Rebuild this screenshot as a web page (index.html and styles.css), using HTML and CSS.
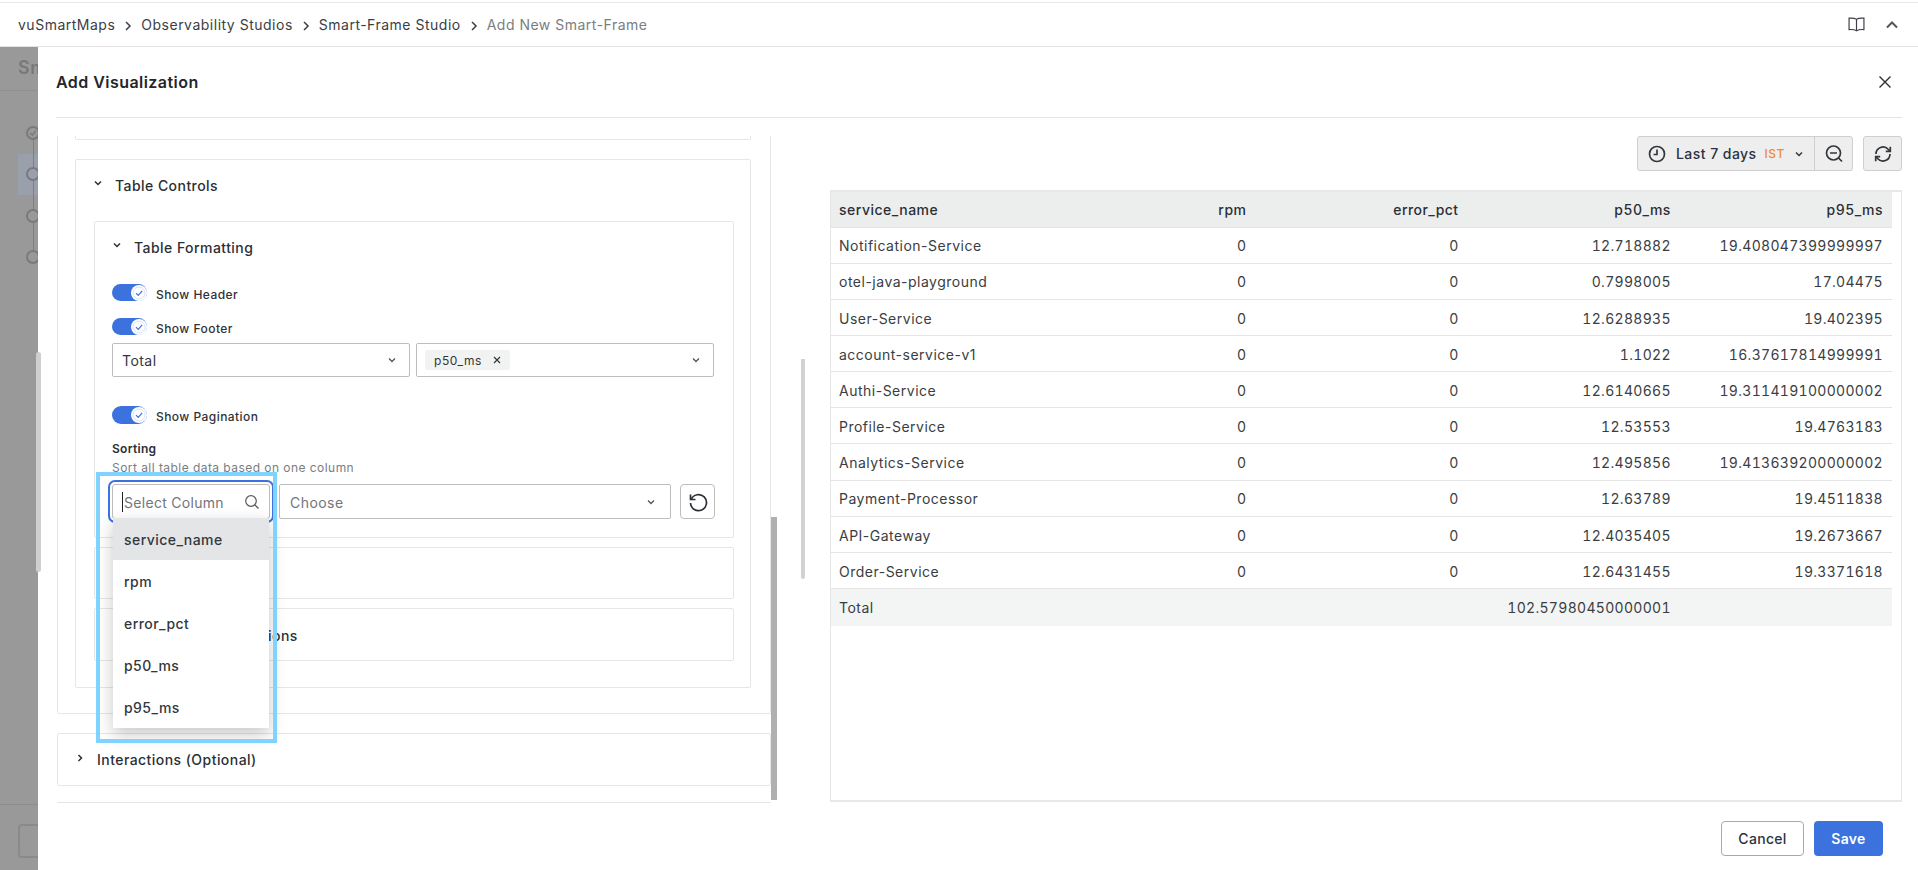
FILE: index.html
```html
<!DOCTYPE html>
<html lang="en">
<head>
<meta charset="utf-8">
<title>Add Visualization</title>
<link rel="stylesheet" href="styles.css">
</head>
<body>
<header class="topbar">
  <nav class="crumbs">
    <span class="crumb">vuSmartMaps</span>
    <svg class="crumb-sep" viewBox="0 0 8 12"><path d="M2 2l4 4-4 4"/></svg>
    <span class="crumb">Observability Studios</span>
    <svg class="crumb-sep" viewBox="0 0 8 12"><path d="M2 2l4 4-4 4"/></svg>
    <span class="crumb">Smart-Frame Studio</span>
    <svg class="crumb-sep" viewBox="0 0 8 12"><path d="M2 2l4 4-4 4"/></svg>
    <span class="crumb crumb-current">Add New Smart-Frame</span>
  </nav>
  <div class="top-actions">
    <svg class="book" viewBox="0 0 16 16"><path d="M8 3.200C6.800 2.200 4 1.800 1 2v10.800c3-.2 5.600.2 7 1.200 1.400-1 4-1.400 7-1.200V2C12 1.800 9.200 2.200 8 3.200zM8 3.200V14"/></svg>
    <svg class="collapse" viewBox="0 0 12 8"><path d="M1 6.500l5-5 5 5"/></svg>
  </div>
</header>

<div class="stage">
  <aside class="backdrop">
    <div class="bd-title">Sm</div>
    <div class="bd-steps">
      <div class="bd-step"><span class="bd-dot"><svg viewBox="0 0 14 14"><path d="M3 7l3 3 5-6"/></svg></span></div>
      <div class="bd-step bd-step-active"><span class="bd-dot"></span></div>
      <div class="bd-step"><span class="bd-dot"></span></div>
      <div class="bd-step"><span class="bd-dot"></span></div>
    </div>
    <div class="bd-foot"><span class="bd-btn"></span></div>
  </aside>
  <div class="outer-thumb"></div>

  <section class="modal">
    <div class="modal-head">
      <h1 class="modal-title">Add Visualization</h1>
      <svg class="close" viewBox="0 0 14 14"><path d="M1.500 1.500l11 11M12.500 1.500l-11 11"/></svg>
    </div>

    <div class="modal-body">
      <div class="left-panel">
        <div class="outer-card">
          <div class="stub-card"></div>
          <div class="card controls-card">
            <div class="heading heading-l1">
              <svg class="chev" viewBox="0 0 10 10"><path d="M2 3.500l3 3 3-3"/></svg>
              <span>Table Controls</span>
            </div>
            <div class="controls-inner">
              <div class="card format-card">
                <div class="heading heading-l2">
                  <svg class="chev" viewBox="0 0 10 10"><path d="M2 3.500l3 3 3-3"/></svg>
                  <span>Table Formatting</span>
                </div>

                <div class="toggle-row first">
                  <span class="toggle"><svg viewBox="0 0 16 16"><circle cx="8" cy="8" r="8" fill="#fff"/><circle cx="8" cy="8" r="6" class="knob-ring"/><path d="M5 8.200l2.200 2.200L11.200 5.800" class="knob-check"/></svg></span>
                  <span class="toggle-label">Show Header</span>
                </div>
                <div class="toggle-row second">
                  <span class="toggle"><svg viewBox="0 0 16 16"><circle cx="8" cy="8" r="8" fill="#fff"/><circle cx="8" cy="8" r="6" class="knob-ring"/><path d="M5 8.200l2.200 2.200L11.200 5.800" class="knob-check"/></svg></span>
                  <span class="toggle-label">Show Footer</span>
                </div>

                <div class="select-row">
                  <div class="select">
                    <span class="select-value">Total</span>
                    <svg class="select-chev" viewBox="0 0 10 10"><path d="M2 3.500l3 3 3-3"/></svg>
                  </div>
                  <div class="select">
                    <span class="chip"><span class="chip-text">p50_ms</span><svg class="chip-x" viewBox="0 0 8 8"><path d="M1 1l6 6M7 1L1 7"/></svg></span>
                    <svg class="select-chev" viewBox="0 0 10 10"><path d="M2 3.500l3 3 3-3"/></svg>
                  </div>
                </div>

                <div class="toggle-row third">
                  <span class="toggle tall"><svg viewBox="0 0 16 16"><circle cx="8" cy="8" r="8" fill="#fff"/><circle cx="8" cy="8" r="6" class="knob-ring"/><path d="M5 8.200l2.200 2.200L11.200 5.800" class="knob-check"/></svg></span>
                  <span class="toggle-label">Show Pagination</span>
                </div>

                <div class="sort-title">Sorting</div>
                <div class="sort-sub">Sort all table data based on one column</div>

                <div class="sort-row">
                  <div class="combo">
                    <span class="caret"></span><span class="combo-placeholder">Select Column</span>
                    <svg class="search" viewBox="0 0 16 16"><circle cx="7" cy="7" r="5.300"/><path d="M11 11l3.500 3.500"/></svg>
                    <ul class="menu">
                      <li class="menu-item active">service_name</li>
                      <li class="menu-item">rpm</li>
                      <li class="menu-item">error_pct</li>
                      <li class="menu-item">p50_ms</li>
                      <li class="menu-item">p95_ms</li>
                    </ul>
                    <div class="annotation"></div>
                  </div>
                  <div class="select choose">
                    <span class="select-value muted">Choose</span>
                    <svg class="select-chev" viewBox="0 0 10 10"><path d="M2 3.500l3 3 3-3"/></svg>
                  </div>
                  <button class="reset" type="button">
                    <svg viewBox="0 0 20 20"><path d="M3.200 7.300A8 8 0 1 1 2.500 11"/><path d="M2.500 2.500v5h5"/></svg>
                  </button>
                </div>
              </div>

              <div class="card sub-card one">
                <div class="heading heading-l2">
                  <svg class="chev chev-r" viewBox="0 0 10 10"><path d="M3.500 2l3 3-3 3"/></svg>
                  <span>Column Formatting</span>
                </div>
              </div>
              <div class="card sub-card two">
                <div class="heading heading-l2">
                  <svg class="chev chev-r" viewBox="0 0 10 10"><path d="M3.500 2l3 3-3 3"/></svg>
                  <span>Column Configurations</span>
                </div>
              </div>
            </div>
          </div>
        </div>

        <div class="card interactions">
          <div class="heading heading-l1b">
            <svg class="chev chev-r" viewBox="0 0 10 10"><path d="M3.500 2l3 3-3 3"/></svg>
            <span>Interactions (Optional)</span>
          </div>
        </div>
      </div>
      <div class="left-scroll"><div class="left-thumb"></div></div>

      <div class="preview-scroll"><div class="preview-thumb"></div></div>

      <div class="preview">
        <div class="toolbar">
          <div class="time-group">
            <div class="time-range">
              <svg class="tool-ico" viewBox="0 0 18 18"><circle cx="9" cy="9" r="7.500"/><path d="M9 4.500V9.500H5.500"/></svg>
              <span class="time-label">Last 7 days</span>
              <span class="time-zone">IST</span>
              <svg class="time-chev" viewBox="0 0 10 10"><path d="M2 3.500l3 3 3-3"/></svg>
            </div>
            <div class="time-zoom">
              <svg class="tool-ico" viewBox="0 0 18 18"><circle cx="8.500" cy="8" r="7"/><path d="M5 8h7M13.500 13l3.500 3.500"/></svg>
            </div>
          </div>
          <button class="refresh" type="button">
            <svg class="tool-ico" viewBox="0 0 18 18"><path d="M2 9a7 7 0 0 1 12.200-4.700L16 6M16 9a7 7 0 0 1-12.200 4.700L2 12"/><path d="M16.300 1.800V6.300h-4.500M1.700 16.200V11.700h4.500"/></svg>
          </button>
        </div>

        <div class="table-box">
          <div class="t-row t-head"><span>service_name</span><span>rpm</span><span>error_pct</span><span>p50_ms</span><span>p95_ms</span></div>
          <div class="t-row"><span>Notification-Service</span><span>0</span><span>0</span><span>12.718882</span><span>19.408047399999997</span></div>
          <div class="t-row"><span>otel-java-playground</span><span>0</span><span>0</span><span>0.7998005</span><span>17.04475</span></div>
          <div class="t-row"><span>User-Service</span><span>0</span><span>0</span><span>12.6288935</span><span>19.402395</span></div>
          <div class="t-row"><span>account-service-v1</span><span>0</span><span>0</span><span>1.1022</span><span>16.37617814999991</span></div>
          <div class="t-row"><span>Authi-Service</span><span>0</span><span>0</span><span>12.6140665</span><span>19.311419100000002</span></div>
          <div class="t-row"><span>Profile-Service</span><span>0</span><span>0</span><span>12.53553</span><span>19.4763183</span></div>
          <div class="t-row"><span>Analytics-Service</span><span>0</span><span>0</span><span>12.495856</span><span>19.413639200000002</span></div>
          <div class="t-row"><span>Payment-Processor</span><span>0</span><span>0</span><span>12.63789</span><span>19.4511838</span></div>
          <div class="t-row"><span>API-Gateway</span><span>0</span><span>0</span><span>12.4035405</span><span>19.2673667</span></div>
          <div class="t-row"><span>Order-Service</span><span>0</span><span>0</span><span>12.6431455</span><span>19.3371618</span></div>
          <div class="t-row t-foot"><span>Total</span><span></span><span></span><span>102.57980450000001</span><span></span></div>
        </div>
      </div>
    </div>

    <div class="modal-foot">
      <button class="btn btn-cancel" type="button">Cancel</button>
      <button class="btn btn-save" type="button">Save</button>
    </div>
  </section>
</div>
</body>
</html>
```

FILE: styles.css
```css
* { box-sizing: border-box; }
html, body { margin: 0; padding: 0; }
body {
  width: 1918px;
  height: 870px;
  overflow: hidden;
  background: #fff;
  color: #2b2f36;
  font-family: Inter, "Noto Sans", sans-serif;
  font-size: 14px;
  letter-spacing: .45px;
}
svg { display: block; fill: none; }

/* top bar */
.topbar {
  height: 45px;
  margin-top: 2px;
  padding: 0 20px 0 18px;
  display: flex;
  align-items: center;
  justify-content: space-between;
  background: #fff;
  border-top: 1px solid #e8e8e8;
  border-bottom: 1px solid #e4e4e4;
}
.crumbs { display: flex; align-items: center; }
.crumb { color: #3b3e44; font-size: 14px; white-space: nowrap; letter-spacing: .5px; }
.crumb-current { color: #7b7d80; }
.crumb-sep { width: 8px; height: 12px; margin: 2px 9px 0 9px; stroke: #3b3e44; stroke-width: 1.500; }
.top-actions { display: flex; align-items: center; gap: 21px; }
.book { width: 17px; height: 17px; stroke: #3b3e44; stroke-width: 1.100; }
.collapse { width: 12px; height: 8px; stroke: #555; stroke-width: 2; }

/* stage */
.stage { display: flex; height: 823px; position: relative; }

/* blurred page behind the modal */
.backdrop {
  width: 38px;
  flex: none;
  background: #999;
  overflow: hidden;
  display: flex;
  flex-direction: column;
  filter: blur(.6px);
}
.bd-title {
  height: 44px;
  flex: none;
  padding: 8px 0 0 18px;
  font-size: 18px;
  line-height: 26px;
  font-weight: 600;
  color: #787878;
  border-bottom: 1px solid #8f8f8f;
  white-space: nowrap;
}
.bd-steps { flex: 1; padding-top: 21px; display: flex; flex-direction: column; }
.bd-step { height: 41.500px; padding-left: 26px; display: flex; align-items: center; position: relative; }
.bd-step + .bd-step::before {
  content: "";
  position: absolute;
  left: 33px;
  top: -14px;
  width: 1px;
  height: 28px;
  background: #7f7f7f;
}
.bd-step-active { background: #999fab; margin-left: 18px; padding-left: 8px; }
.bd-step-active::before { left: 15px !important; }
.bd-dot { width: 14px; height: 14px; border-radius: 50%; border: 2px solid #7a7a7a; flex: none; }
.bd-dot svg { width: 10px; height: 10px; stroke: #7a7a7a; stroke-width: 2; }
.bd-foot { height: 66px; flex: none; border-top: 1px solid #8d8d8d; padding: 19px 0 0 18px; }
.bd-btn { display: block; width: 40px; height: 34px; border: 2px solid #8a8a8a; border-radius: 4px; }
.outer-thumb {
  position: absolute;
  left: 36px;
  top: 305px;
  width: 5px;
  height: 220px;
  border-radius: 3px;
  background: #cfcfcf;
}

/* modal */
.modal { flex: 1; min-width: 0; background: #fff; display: flex; flex-direction: column; }
.modal-head {
  height: 71px;
  margin: 0 16px 0 18px;
  flex: none;
  display: flex;
  align-items: center;
  justify-content: space-between;
  padding-bottom: 1px;
  border-bottom: 1px solid #e4e4e4;
}
.modal-title { margin: 0; font-size: 16px; font-weight: 600; color: #23262b; }
.close { width: 14px; height: 14px; margin-right: 10px; stroke: #2b2f36; stroke-width: 1.400; }

.modal-body { height: 667px; margin-top: 18px; flex: none; display: flex; padding-left: 19px; }
.modal-foot {
  flex: 1;
  display: flex;
  justify-content: flex-end;
  align-items: flex-start;
  gap: 10px;
  padding: 18px 35px 0 0;
}

/* left panel */
.left-panel {
  width: 714px;
  flex: none;
  overflow: hidden;
  height: 100%;
  border-bottom: 1px solid #e4e4e4;
  position: relative;
}
.outer-card {
  height: 578px;
  border: 1px solid #e6e6e6;
  border-top: 0;
  border-radius: 0 0 2px 2px;
  padding: 0 19px 0 17px;
}
.stub-card {
  height: 4px;
  border: 1px solid #e6e6e6;
  border-top: 0;
  border-radius: 0 0 2px 2px;
}
.card { border: 1px solid #e6e6e6; border-radius: 2px; background: #fff; }
.controls-card { margin-top: 19px; height: 529px; }
.heading { display: flex; align-items: center; font-size: 14px; font-weight: 500; color: #2b2f36; white-space: nowrap; }
.heading-l1 { height: 50px; padding-left: 17px; padding-top: 1px; }
.heading-l2 { height: 52px; padding-left: 17px; }
.heading-l1b { height: 52px; padding-left: 17px; padding-bottom: 1px; }
.chev { width: 10px; height: 10px; margin-right: 12px; margin-top: -5px; stroke: #2b2f36; stroke-width: 1.500; flex: none; }
.chev-r { margin-top: -3px; }
.controls-inner { padding: 11px 16px 0 18px; }

.format-card { height: 317px; padding: 0 19px 0 17px; }
.format-card .heading-l2 { padding-left: 0; height: 50px; }

.toggle-row { display: flex; align-items: flex-start; gap: 9px; height: 17px; }
.toggle-row.first { margin-top: 12px; }
.toggle-row.second { margin-top: 17px; }
.toggle-row.third { margin-top: 29px; height: 18px; }
.toggle {
  width: 35px;
  height: 17px;
  border-radius: 9px;
  background: #3b72dd;
  padding: .500px .500px .500px 18.500px;
  flex: none;
}
.toggle svg { width: 16px; height: 16px; }
.toggle.tall { height: 18px; padding-top: 1px; }
.knob-ring { stroke: #c6d6f6; stroke-width: .7; fill: none; }
.knob-check { stroke: #3b72dd; stroke-width: 1.200; fill: none; }
.toggle-label { font-size: 12px; font-weight: 500; color: #2f3237; line-height: 17px; margin-top: 2px; }

.select-row { display: flex; gap: 6px; margin-top: 8px; }
.select {
  flex: 1;
  height: 34px;
  border: 1px solid #bdbdbd;
  border-radius: 2px;
  display: flex;
  align-items: center;
  justify-content: space-between;
  padding: 0 12px 0 9px;
  background: #fff;
}
.select-value { font-size: 14px; color: #33373d; }
.select-value.muted { color: #72757a; padding-top: 1px; }
.select-chev { width: 10px; height: 10px; stroke: #555; stroke-width: 1.300; flex: none; }
.chip {
  height: 20px;
  width: 85px;
  margin-left: -1px;
  padding: 0 9px 0 9px;
  background: #f1f2f2;
  border-radius: 2px;
  display: flex;
  align-items: center;
  justify-content: space-between;
  font-size: 12px;
  letter-spacing: .6px;
  color: #33373d;
  white-space: nowrap;
}
.chip-x { width: 8px; height: 8px; stroke: #33373d; stroke-width: 1.200; }

.sort-title { margin-top: 17px; font-size: 12px; line-height: 16px; font-weight: 600; color: #2b2f36; letter-spacing: .3px; }
.sort-sub { margin-top: 3px; font-size: 12px; line-height: 16px; color: #7a7d82; white-space: nowrap; }
.sort-row { display: flex; height: 35px; margin-top: 8px; }
.combo {
  width: 158px;
  flex: none;
  height: 35px;
  position: relative;
  border: 1px solid #bdbdbd;
  border-radius: 3px;
  outline: 2px solid #3b72dd;
  outline-offset: 2px;
  display: flex;
  align-items: center;
  padding-left: 9px;
  background: #fff;
}
.caret { width: 1px; height: 20px; background: #222; flex: none; }
.combo-placeholder { font-size: 14px; color: #72757a; margin-left: 1px; padding-top: 1px; white-space: nowrap; letter-spacing: .3px; }
.search { position: absolute; right: 9px; top: 9px; width: 16px; height: 16px; stroke: #55585d; stroke-width: 1.200; }
.menu {
  position: absolute;
  left: 0;
  top: 33px;
  width: 156px;
  margin: 0;
  padding: 0;
  list-style: none;
  background: #fff;
  box-shadow: 0 6px 16px rgba(0, 0, 0, .22);
  z-index: 2;
}
.menu-item { height: 42px; padding-left: 11px; display: flex; align-items: center; font-size: 14px; font-weight: 500; color: #33373d; }
.menu-item.active { background: #e4e5e7; }
.annotation {
  position: absolute;
  left: -17px;
  top: -13px;
  width: 181px;
  height: 271px;
  border: 4px solid #7fd4ff;
  z-index: 3;
  pointer-events: none;
}
.choose { flex: none; width: 392px; height: 35px; margin-left: 9px; padding: 0 14px 0 10px; }
.reset {
  width: 35px;
  height: 35px;
  margin-left: 9px;
  padding: 0;
  background: #fff;
  border: 1px solid #bdbdbd;
  border-radius: 4px;
  display: flex;
  align-items: center;
  justify-content: center;
  flex: none;
}
.reset svg { width: 20px; height: 20px; stroke: #2b2f36; stroke-width: 1.700; }

.sub-card { margin-top: 9px; }
.sub-card.one { height: 52px; }
.sub-card.two { height: 53px; }
.interactions { margin-top: 19px; height: 53px; }

/* scrollbars */
.left-scroll { width: 6px; flex: none; height: 100%; padding-top: 381px; }
.left-thumb { height: 283px; background: #b0b0b0; }
.preview-scroll { width: 4px; flex: none; margin-left: 24px; padding-top: 223px; }
.preview-thumb { height: 220px; background: #d2d2d2; border-radius: 0 0 2px 2px; }

/* preview */
.preview { flex: none; width: 1072px; margin-left: 25px; display: flex; flex-direction: column; }
.toolbar { height: 35px; flex: none; display: flex; justify-content: flex-end; gap: 10px; }
.time-group {
  display: flex;
  background: #eee;
  border: 1px solid #cfcfcf;
  border-radius: 3px;
  width: 216px;
}
.time-range {
  width: 177px;
  display: flex;
  align-items: center;
  padding-left: 10px;
  border-right: 1px solid #cfcfcf;
}
.time-label { margin-left: 10px; font-size: 14px; font-weight: 500; color: #2b3340; white-space: nowrap; }
.time-zone { margin-left: 8px; font-size: 12px; font-weight: 500; color: #ef8a35; }
.time-chev { width: 10px; height: 10px; margin-left: 9px; stroke: #33373d; stroke-width: 1.500; }
.time-zoom { flex: 1; display: flex; align-items: center; justify-content: center; }
.tool-ico { width: 18px; height: 18px; stroke: #33373d; stroke-width: 1.700; }
.refresh {
  width: 39px;
  padding: 0;
  background: #eee;
  border: 1px solid #cfcfcf;
  border-radius: 3px;
  display: flex;
  align-items: center;
  justify-content: center;
}
.table-box {
  margin-top: 19px;
  height: 612px;
  border-left: 1px solid #e6e6e6;
  border-right: 1px solid #e6e6e6;
  border-top: 2px solid #e8e8e8;
  border-bottom: 2px solid #e8e8e8;
  padding-right: 9px;
}
.t-row {
  display: grid;
  grid-template-columns: repeat(5, 1fr);
  height: 36.170px;
  align-items: center;
  border-bottom: 1px solid #e5e5e5;
  font-size: 14px;
  color: #3a3d42;
  white-space: nowrap;
}
.t-row span { padding: 1.500px 9px 0 0; text-align: right; font-variant-numeric: tabular-nums; letter-spacing: .3px; }
.t-row span:first-child { padding-left: 8px; text-align: left; letter-spacing: .5px; font-variant-numeric: normal; }
.t-head span { padding-top: 0; letter-spacing: .45px; }
.t-head { height: 35.500px; background: #eceeee; font-weight: 500; color: #2b2f36; border-bottom: 1px solid #e3e5e5; }
.t-foot { height: 37px; background: #f3f4f4; border-bottom: 0; }
.t-foot span { padding-top: 0; }

/* footer */
.btn { height: 35px; border-radius: 4px; font: inherit; font-size: 14px; font-weight: 500; padding: 0; letter-spacing: .3px; }
.btn-cancel { width: 83px; background: #fff; border: 1px solid #aaa; color: #2b3340; }
.btn-save { width: 69px; background: #3b72dd; border: 0; color: #fff; font-weight: 600; }
```
